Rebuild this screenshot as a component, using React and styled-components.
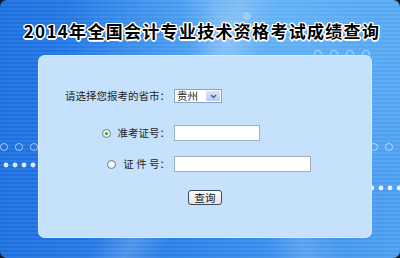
import styled, { createGlobalStyle } from 'styled-components';

const GlobalStyle = createGlobalStyle`
  html, body {
    margin: 0;
    padding: 0;
    background: #0e1e36;
  }
`;

const Frame = styled.div`
  position: relative;
  width: 400px;
  height: 258px;
  border-radius: 7px;
  overflow: hidden;
  display: flex;
  flex-direction: column;
  background:
    linear-gradient(115deg, transparent 40%, rgba(255, 255, 255, 0.18) 47%, transparent 54%),
    linear-gradient(70deg, transparent 55%, rgba(255, 255, 255, 0.14) 62%, transparent 70%),
    repeating-linear-gradient(0deg, rgba(255, 255, 255, 0.07) 0 2px, transparent 2px 4px),
    radial-gradient(ellipse at 70% 10%, #63b3f6 0%, rgba(99, 179, 246, 0) 55%),
    linear-gradient(90deg, #1c6fdf 0%, #2a80e8 45%, #3d92ee 75%, #4c9ef0 100%);
`;

const Decor = styled.svg`
  position: absolute;
  inset: 0;
  pointer-events: none;
`;

const Title = styled.h1`
  position: relative;
  margin: 0;
  height: 55px;
  display: flex;
  align-items: center;
  justify-content: center;
  padding: 5px 0 0 4px;
  box-sizing: border-box;
  font-family: 'Noto Sans CJK SC', 'Liberation Sans', sans-serif;
  font-size: 17px;
  font-weight: 700;
  color: #000;
  letter-spacing: 1.3px;
  text-shadow:
    1px 0 0 #fff, -1px 0 0 #fff, 0 1px 0 #fff, 0 -1px 0 #fff,
    1px 1px 0 #fff, -1px -1px 0 #fff, 1px -1px 0 #fff, -1px 1px 0 #fff,
    1.5px 0 0 #fff, -1.5px 0 0 #fff, 0 1.5px 0 #fff, 0 -1.5px 0 #fff;
`;

const Panel = styled.div`
  position: relative;
  margin: 0 28px 0 38px;
  height: 183px;
  box-sizing: border-box;
  padding-top: 34px;
  border-radius: 7px;
  background: #c5e1fb;
  box-shadow: inset 0 0 0 1px rgba(255, 255, 255, 0.35);
  display: flex;
  flex-direction: column;
  font-family: 'Noto Sans CJK SC', 'Liberation Sans', sans-serif;
  font-size: 10.5px;
  color: #1e1e1e;
`;

const Row = styled.div`
  display: grid;
  grid-template-columns: 132px 1fr;
  column-gap: 4px;
  align-items: center;
  height: ${(p) => p.$h}px;
  margin-top: ${(p) => p.$top || 0}px;
`;

const Label = styled.label`
  display: flex;
  align-items: center;
  justify-content: flex-end;
  gap: 7px;
  white-space: pre;
  line-height: 1;
`;

const Radio = styled.span`
  width: 9px;
  height: 9px;
  box-sizing: border-box;
  border-radius: 50%;
  border: 1px solid #6f7f8f;
  background: radial-gradient(circle at 50% 50%, #ffffff 0%, #e4e8ec 100%);
  display: flex;
  align-items: center;
  justify-content: center;

  &::after {
    content: '';
    width: 3px;
    height: 3px;
    border-radius: 50%;
    background: ${(p) => (p.$checked ? '#2ba52b' : 'transparent')};
  }
`;

const SelectBox = styled.div`
  width: 48px;
  height: 14px;
  box-sizing: border-box;
  border: 1px solid #8aa3bd;
  background: #fff;
  display: flex;
  align-items: stretch;
`;

const SelectValue = styled.span`
  flex: 1;
  padding-left: 2px;
  line-height: 12px;
  font-size: 10.5px;
`;

const SelectArrow = styled.span`
  width: 14px;
  margin: 1px;
  background: linear-gradient(#d6e2fb, #b9cdf6);
  border-radius: 1px;
  display: flex;
  align-items: center;
  justify-content: center;
`;

const TextInput = styled.input`
  width: ${(p) => p.$w}px;
  height: 16px;
  box-sizing: border-box;
  border: 1px solid #9fb0c0;
  background: #fff;
  padding: 0 2px;
  outline: none;
  font-size: 10.5px;
`;

const ButtonRow = styled.div`
  display: flex;
  justify-content: center;
  margin-top: 18px;
`;

const Button = styled.button`
  width: 34px;
  height: 15px;
  padding: 0;
  box-sizing: border-box;
  border: 1px solid #3b4a5e;
  border-radius: 3px;
  background: linear-gradient(#fdfdfd, #e6e4dc);
  font-family: 'Noto Sans CJK SC', 'Liberation Sans', sans-serif;
  font-size: 10.5px;
  line-height: 12px;
  color: #111;
  cursor: pointer;
`;

function Decorations() {
  const ring = (x, y, k) => (
    <circle key={k} cx={x} cy={y} r="3.6" fill="none" stroke="rgba(255,255,255,0.55)" strokeWidth="1" />
  );
  const dot = (x, y, k) => <circle key={k} cx={x} cy={y} r="2.4" fill="rgba(255,255,255,0.85)" />;
  return (
    <Decor width="400" height="258" viewBox="0 0 400 258">
      {[4, 19, 34].map((x, i) => ring(x, 147, 'l' + i))}
      {[6, 15, 24, 33].map((x, i) => dot(x, 165, 'ld' + i))}
      {[374, 389].map((x, i) => ring(x, 147, 'r' + i))}
      {[372, 381, 390, 399].map((x, i) => dot(x, 188, 'rd' + i))}
      {[318, 334, 350, 366].map((x, i) => ring(x, 54, 't' + i))}
      <circle cx="247" cy="16" r="4" fill="rgba(255,255,255,0.25)" />
    </Decor>
  );
}

export default function App() {
  return (
    <>
      <GlobalStyle />
      <Frame>
        <Decorations />
        <Title>2014年全国会计专业技术资格考试成绩查询</Title>
        <Panel>
          <Row $h={14}>
            <Label>请选择您报考的省市：</Label>
            <SelectBox>
              <SelectValue>贵州</SelectValue>
              <SelectArrow>
                <svg width="7" height="5" viewBox="0 0 7 5">
                  <path d="M1 1 L3.5 3.5 L6 1" fill="none" stroke="#4d6185" strokeWidth="1.4" />
                </svg>
              </SelectArrow>
            </SelectBox>
          </Row>
          <Row $h={16} $top={22}>
            <Label>
              <Radio $checked />
              准考证号：
            </Label>
            <TextInput $w={86} />
          </Row>
          <Row $h={16} $top={15}>
            <Label>
              <Radio />
              证 件 号：
            </Label>
            <TextInput $w={137} />
          </Row>
          <ButtonRow>
            <Button type="button">查询</Button>
          </ButtonRow>
        </Panel>
      </Frame>
    </>
  );
}
